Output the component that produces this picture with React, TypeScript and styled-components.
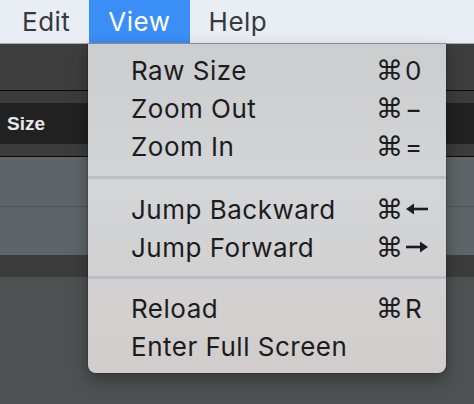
import styled, { createGlobalStyle } from 'styled-components'

const Global = createGlobalStyle`
	html, body {
		margin: 0;
		padding: 0;
		background: #4d5151;
		overflow: hidden;
	}
	body {
		font-family: Inter, 'Liberation Sans', sans-serif;
	}
`

const Screen = styled.div`
	position: relative;
	width: 474px;
	height: 404px;
	display: flex;
	flex-direction: column;
	background: #4d5151;
`

const MenuBar = styled.nav`
	height: 43px;
	display: flex;
	padding-left: 3px;
	background: #e9eef5;
	border-bottom: 1px solid #a8abaf;
`

const BarItem = styled.div<{ $active?: boolean }>`
	display: flex;
	align-items: center;
	padding: 0 19px;
	font-size: 26px;
	letter-spacing: 0.5px;
	color: ${(p) => (p.$active ? '#ffffff' : '#363a3e')};
	background: ${(p) => (p.$active ? '#3a8ef6' : 'transparent')};
`

const Band = styled.div<{ $h: number; $bg: string; $line?: string }>`
	height: ${(p) => p.$h}px;
	background: ${(p) => p.$bg};
	border-bottom: ${(p) => (p.$line ? `1px solid ${p.$line}` : 'none')};
	display: flex;
	align-items: center;
	flex-shrink: 0;
`

const ColumnTitle = styled.span`
	padding-left: 7px;
	font-family: 'Liberation Sans', Arial, sans-serif;
	font-weight: bold;
	font-size: 19px;
	color: #e8e8ea;
`

const Dropdown = styled.div`
	position: absolute;
	left: 88px;
	top: 44px;
	width: 358px;
	padding: 7px 0 8px;
	box-sizing: border-box;
	border-radius: 0 0 8px 8px;
	background: linear-gradient(180deg, #cbcdcf 0%, #d3d5d7 45%, #d2cdcc 100%);
	box-shadow: 0 6px 16px rgba(0, 0, 0, 0.35), 0 0 0 1px rgba(0, 0, 0, 0.12);
`

const Item = styled.div`
	display: grid;
	grid-template-columns: 1fr 70px;
	align-items: center;
	height: 38px;
	padding-left: 43px;
	font-size: 26px;
	letter-spacing: 0.5px;
	color: #1c1c1e;
`

const Shortcut = styled.span`
	display: flex;
	align-items: center;
	gap: 2px;
	letter-spacing: 0;
`

const Cmd = styled.span`
	font-family: 'DejaVu Sans', sans-serif;
	font-size: 27px;
	line-height: 1;
`

const Separator = styled.div<{ $gap: number }>`
	height: 3px;
	margin: ${(p) => p.$gap}px 0;
	background: #bcc0c3;
`

const Arrow = ({ dir }: { dir: 'left' | 'right' }) => (
	<svg width="24" height="14" viewBox="0 0 24 14" style={{ transform: dir === 'right' ? 'scaleX(-1)' : undefined }}>
		<line x1="6" y1="7" x2="23" y2="7" stroke="#1c1c1e" strokeWidth="2.6" />
		<path d="M1 7 L9 1.5 L9 12.5 Z" fill="#1c1c1e" />
	</svg>
)

type Entry = { label: string; key?: React.ReactNode }

const groups: Entry[][] = [
	[
		{ label: 'Raw Size', key: '0' },
		{ label: 'Zoom Out', key: '−' },
		{ label: 'Zoom In', key: '=' },
	],
	[
		{ label: 'Jump Backward', key: <Arrow dir="left" /> },
		{ label: 'Jump Forward', key: <Arrow dir="right" /> },
	],
	[{ label: 'Reload', key: 'R' }, { label: 'Enter Full Screen' }],
]

export default function App() {
	return (
		<>
			<Global />
			<Screen>
				<MenuBar>
					<BarItem>Edit</BarItem>
					<BarItem $active>View</BarItem>
					<BarItem>Help</BarItem>
				</MenuBar>
				<Band $h={46} $bg="#3d3d3d" $line="#0a0a0a" />
				<Band $h={12} $bg="#3b3b3b" />
				<Band $h={41} $bg="#212121">
					<ColumnTitle>Size</ColumnTitle>
				</Band>
				<Band $h={12} $bg="#3b3b3b" $line="#0a0a0a" />
				<Band $h={49} $bg="#5e6467" $line="#4e5355" />
				<Band $h={48} $bg="#5e6467" />
				<Band $h={22} $bg="#3c3c3c" />

				<Dropdown>
					{groups.map((g, gi) => (
						<div key={gi}>
							{gi > 0 && <Separator $gap={gi === 1 ? 11 : 10} />}
							{g.map((e) => (
								<Item key={e.label}>
									<span>{e.label}</span>
									{e.key && (
										<Shortcut>
											<Cmd>⌘</Cmd>
											{e.key}
										</Shortcut>
									)}
								</Item>
							))}
						</div>
					))}
				</Dropdown>
			</Screen>
		</>
	)
}
